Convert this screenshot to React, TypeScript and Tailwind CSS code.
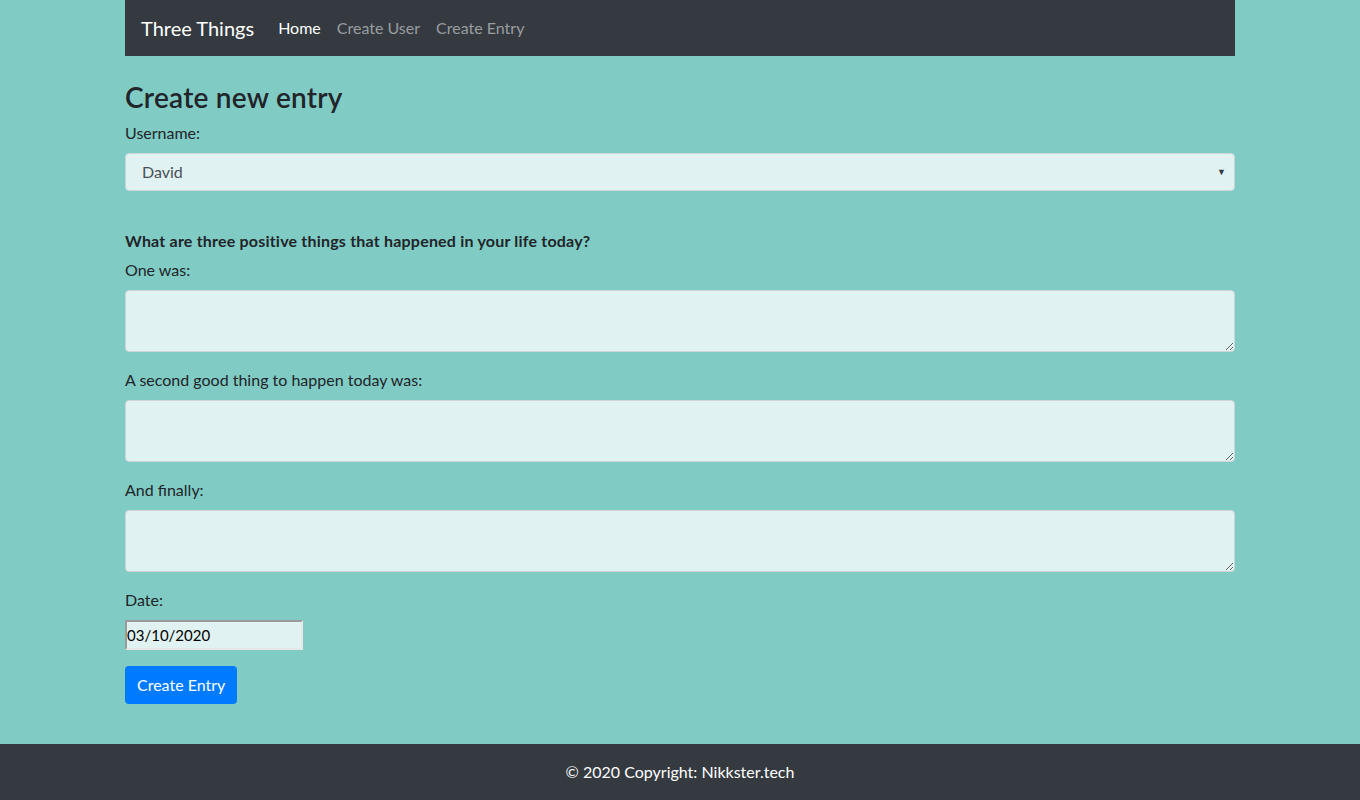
import { useState } from "react"

const font = { fontFamily: 'Lato, "Noto Sans", sans-serif' }

// One labelled textarea for each of the three good things
function ThingField({ label }: { label: string }) {
  return (
    <div className="mb-4">
      <label className="block mb-2 leading-6">{label}</label>
      <textarea
        rows={2}
        className="block w-full h-[62px] rounded border border-[#ced4da] bg-[#e0f2f1] px-3 py-1.5 leading-6 text-[#495057] outline-none"
      />
    </div>
  )
}

export default function App() {
  const [user, setUser] = useState("David")

  return (
    <div
      className="min-h-screen flex flex-col bg-[#80cbc4] text-[#212529] text-base"
      style={font}
    >
      <div className="flex-1">
        <div className="w-[1110px] mx-auto">
          <nav className="h-14 bg-[#343a40] flex items-center px-4">
            <span className="text-white text-xl mr-6">Three Things</span>
            <div className="flex gap-4">
              <a className="text-white">Home</a>
              <a className="text-[#9a9da0]">Create User</a>
              <a className="text-[#9a9da0]">Create Entry</a>
            </div>
          </nav>

          <h3 className="mt-[25px] mb-[7px] text-[28px] leading-[33px] font-semibold tracking-[0.25px]">Create new entry</h3>

          <form>
            <div className="mb-4">
              <label className="block mb-2 leading-6">Username:</label>
              <div className="relative">
                <select
                  value={user}
                  onChange={(e) => setUser(e.target.value)}
                  className="block w-full h-[38px] appearance-none rounded border border-[#ced4da] bg-[#e0f2f1] pl-4 pr-7 text-[#495057] outline-none"
                >
                  <option>David</option>
                  <option>Nikki</option>
                </select>
                <span className="absolute right-[9px] top-[14px] text-[9px] leading-none text-[#343a40] pointer-events-none">▼</span>
              </div>
            </div>

            <p className="mt-[38px] mb-[5px] font-bold leading-6 tracking-[0.2px]">
              What are three positive things that happened in your life today?
            </p>

            <ThingField label="One was:" />
            <ThingField label="A second good thing to happen today was:" />
            <ThingField label="And finally:" />

            <div className="mb-4">
              <label className="block mb-2 leading-6">Date:</label>
              <input
                type="text"
                defaultValue="03/10/2020"
                className="block w-[178px] h-[30px] bg-[#e0f2f1] border-2 border-t-[#9a9a9a] border-l-[#9a9a9a] border-r-[#e6e6e6] border-b-[#e6e6e6] px-0 text-[15px] text-black outline-none"
              />
            </div>

            <button
              type="button"
              className="h-[38px] px-3 rounded bg-[#007bff] text-white"
            >
              Create Entry
            </button>
          </form>
        </div>
      </div>

      <footer className="h-14 bg-[#343a40] text-white flex items-center justify-center">
        © 2020 Copyright: Nikkster.tech
      </footer>
    </div>
  )
}
